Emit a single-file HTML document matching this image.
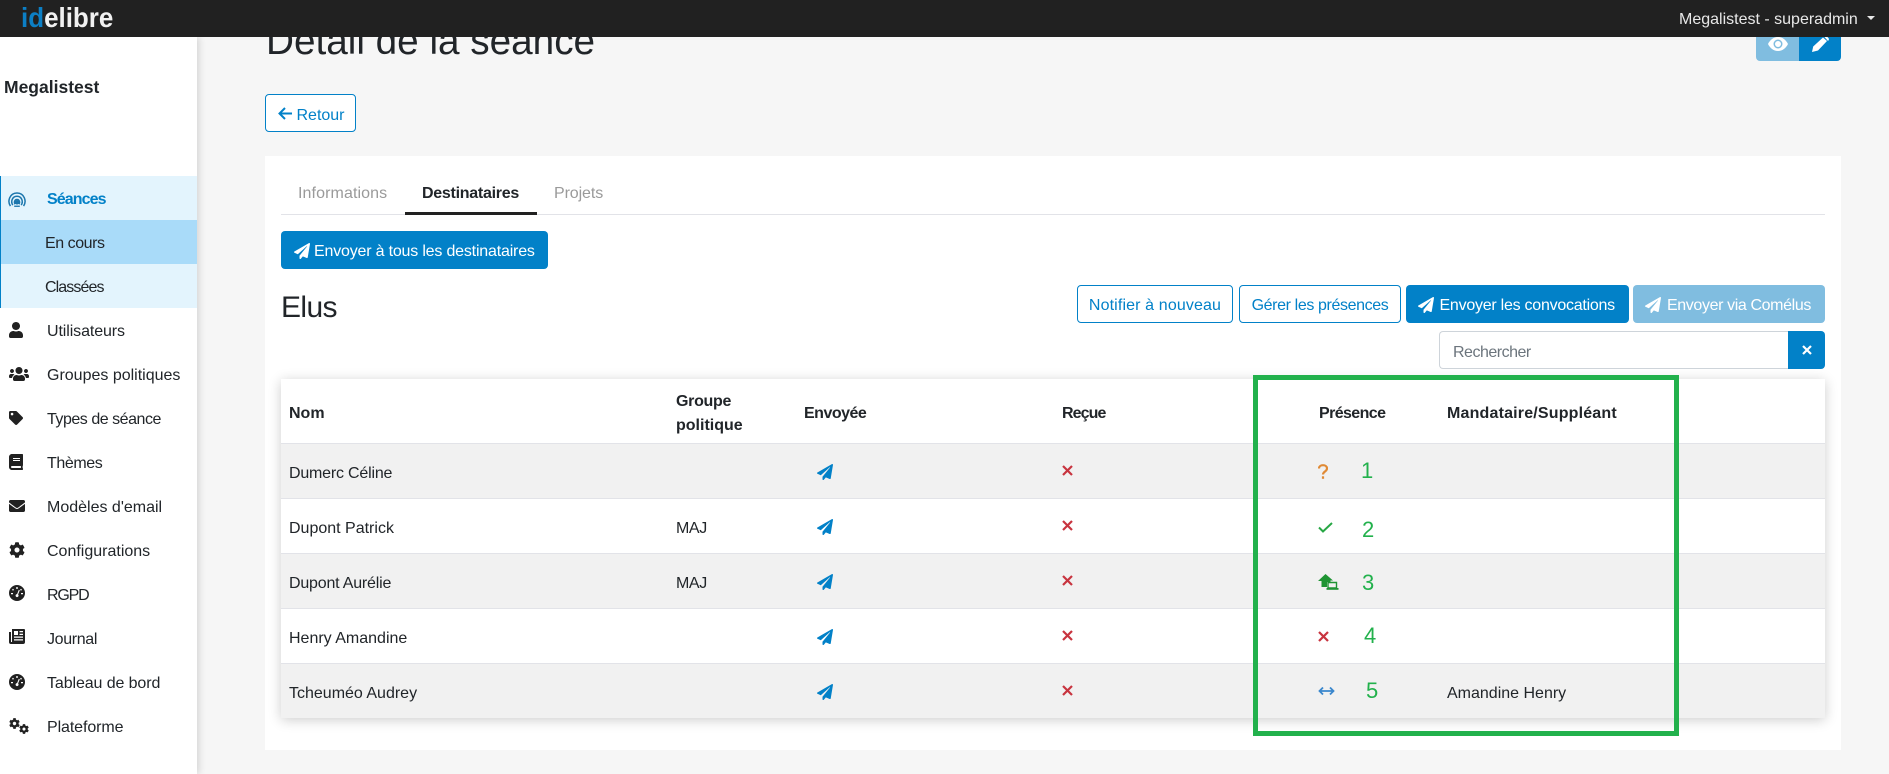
<!DOCTYPE html>
<html lang="fr"><head><meta charset="utf-8"><title>idelibre</title>
<style>
html,body{margin:0;padding:0}
body{width:1889px;height:774px;overflow:hidden;position:relative;background:#f6f6f6;font-family:"Liberation Sans",sans-serif;font-size:16px;color:#212529}
.a,.t,svg,.b{position:absolute}
.t{line-height:20px;white-space:nowrap;margin-top:4px}
.b{box-sizing:border-box;border-radius:4px;text-align:center;white-space:nowrap;line-height:40px;font-size:16px}
.o{border:1px solid #0281c8;color:#0281c8;background:#fff}
.f{background:#0281c8;color:#fff;line-height:42px;text-align:left}
.h{font-weight:bold}
.line{position:absolute;left:281px;width:1544px;height:2px;background:#e2e3e8}
.m{fill:#212121}
.g{font-size:22px;color:#22b14c;margin-top:0}
</style></head><body>
<div class="t" style="left:266px;top:14px;font-size:38.700px;line-height:48px;color:#212529">Détail de la séance</div>
<div class="a" style="left:1756px;top:20px;width:43px;height:41px;background:#80bde0;border-radius:0 0 0 4px"></div>
<div class="a" style="left:1799px;top:20px;width:42px;height:41px;background:#0281c8;border-radius:0 0 4px 0"></div>
<svg style="left:1768px;top:37px" width="20" height="14" viewBox="0 0 20 14"><path fill="#fff" d="M10 0C5.500 0 2 3 0 7c2 4 5.500 7 10 7s8-3 10-7c-2-4-5.500-7-10-7zm0 11.500a4.500 4.500 0 1 1 0-9 4.500 4.500 0 0 1 0 9z"/><circle cx="10" cy="7" r="3" fill="#fff"/></svg>
<svg style="left:1812px;top:36px" width="17" height="16" viewBox="0 0 17 16"><path fill="#fff" d="M11 1.500l4 3.500L6 14.500 0 16l1.200-5.500zM12 .5c1-.8 2-.7 2.800 0l1.500 1.400c.8.800.8 1.900 0 2.700L16 5z"/></svg>

<div class="a" style="left:0;top:37px;width:197px;height:737px;background:#fff;box-shadow:2px 0 7px rgba(0,0,0,.14)"></div>
<div class="a" style="left:0;top:0;width:1889px;height:37px;background:#212121"></div>
<div class="t" style="left:21px;top:3px;margin:0;line-height:30px;font-size:28px;font-weight:bold;color:#f1f1f1;transform:scaleX(.927);transform-origin:left center"><span style="color:#0c7fc5">id</span>elibre</div>
<div class="t" style="left:1679px;top:6px;color:#e8e8e8">Megalistest - superadmin</div>
<div class="a" style="left:1867px;top:16px;width:0;height:0;border:4.500px solid transparent;border-top-color:#e8e8e8;border-bottom:0"></div>

<div class="t h" style="left:4px;top:77px;margin:0;font-size:17.500px">Megalistest</div>
<div class="a" style="left:0;top:176px;width:197px;height:132px;background:#e3f4fd;border-left:1px solid #0281c8;box-sizing:border-box"></div>
<div class="a" style="left:1px;top:220px;width:196px;height:44px;background:#a9dbf9"></div>
<div class="t h" style="left:47px;top:186px;color:#0281c8;letter-spacing:-.9px">Séances</div>
<div class="t" style="left:45px;top:230px;letter-spacing:-.45px">En cours</div>
<div class="t" style="left:45px;top:274px;letter-spacing:-.9px">Classées</div>
<div class="t" style="left:47px;top:318px;letter-spacing:-.1px">Utilisateurs</div>
<div class="t" style="left:47px;top:362px">Groupes politiques</div>
<div class="t" style="left:47px;top:406px;letter-spacing:-.47px">Types de séance</div>
<div class="t" style="left:47px;top:450px;letter-spacing:-.4px">Thèmes</div>
<div class="t" style="left:47px;top:494px">Modèles d'email</div>
<div class="t" style="left:47px;top:538px">Configurations</div>
<div class="t" style="left:47px;top:582px;letter-spacing:-1.2px">RGPD</div>
<div class="t" style="left:47px;top:626px;letter-spacing:-.35px">Journal</div>
<div class="t" style="left:47px;top:670px;letter-spacing:-.1px">Tableau de bord</div>
<div class="t" style="left:47px;top:714px;letter-spacing:-.1px">Plateforme</div>

<svg style="left:7px;top:192px" width="20" height="15" viewBox="0 0 20 16" fill="none" stroke="#1c76ad" stroke-width="1.600"><path d="M3 15C-.5 10 2 1 10 1s10.500 9 7 14"/><path d="M5.500 14C3 10 5 4.500 10 4.500S17 10 14.500 14"/><path d="M8 13c-1.500-2-.5-5 2-5s3.500 3 2 5"/><circle cx="10" cy="11" r="1.500" fill="#1c76ad"/><path d="M7 15.200h6" stroke-width="1.400"/></svg>
<svg class="m" style="left:9px;top:322px" width="14" height="16" viewBox="0 0 448 512"><path d="M224 256c70.700 0 128-57.300 128-128S294.700 0 224 0 96 57.300 96 128s57.300 128 128 128zm89.600 32h-16.700c-22.200 10.200-46.900 16-72.900 16s-50.600-5.800-72.900-16h-16.700C60.200 288 0 348.200 0 422.400V464c0 26.500 21.500 48 48 48h352c26.500 0 48-21.500 48-48v-41.600c0-74.200-60.200-134.400-134.400-134.400z"/></svg>
<svg class="m" style="left:9px;top:366px" width="20" height="16" viewBox="0 0 640 512"><path d="M96 224c35.300 0 64-28.700 64-64s-28.700-64-64-64-64 28.700-64 64 28.700 64 64 64zm448 0c35.300 0 64-28.700 64-64s-28.700-64-64-64-64 28.700-64 64 28.700 64 64 64zm32 32h-64c-17.600 0-33.500 7.100-45.100 18.600 40.300 22.100 68.900 62 75.100 109.400h66c17.700 0 32-14.300 32-32v-32c0-35.300-28.700-64-64-64zm-256 0c61.900 0 112-50.100 112-112S381.900 32 320 32 208 82.100 208 144s50.100 112 112 112zm76.800 32h-8.300c-20.800 10-43.900 16-68.500 16s-47.600-6-68.500-16h-8.300C179.600 288 128 339.600 128 403.200V432c0 26.500 21.500 48 48 48h288c26.500 0 48-21.500 48-48v-28.800c0-63.600-51.600-115.200-115.200-115.200zm-223.700-13.400C161.500 263.100 145.600 256 128 256H64c-35.300 0-64 28.700-64 64v32c0 17.700 14.300 32 32 32h65.900c6.300-47.400 34.900-87.300 75.200-109.400z"/></svg>
<svg class="m" style="left:9px;top:411px" width="14" height="14" viewBox="0 0 512 512"><path d="M0 252.118V48C0 21.490 21.490 0 48 0h204.118a48 48 0 0 1 33.941 14.059l211.882 211.882c18.745 18.745 18.745 49.137 0 67.882L293.823 497.941c-18.745 18.745-49.137 18.745-67.882 0L14.059 286.059A48 48 0 0 1 0 252.118zM112 64c-26.510 0-48 21.490-48 48s21.490 48 48 48 48-21.490 48-48-21.490-48-48-48z"/></svg>
<svg class="m" style="left:9px;top:454px" width="14" height="16" viewBox="0 0 448 512"><path d="M448 360V24c0-13.300-10.700-24-24-24H96C43 0 0 43 0 96v320c0 53 43 96 96 96h328c13.300 0 24-10.700 24-24v-16c0-7.500-3.500-14.300-8.900-18.700-4.200-15.400-4.200-59.300 0-74.700 5.400-4.300 8.900-11.100 8.900-18.600zM128 134c0-3.300 2.700-6 6-6h212c3.300 0 6 2.700 6 6v20c0 3.300-2.700 6-6 6H134c-3.300 0-6-2.700-6-6v-20zm0 64c0-3.300 2.700-6 6-6h212c3.300 0 6 2.700 6 6v20c0 3.300-2.700 6-6 6H134c-3.300 0-6-2.700-6-6v-20zm253.400 250H96c-17.700 0-32-14.300-32-32 0-17.600 14.400-32 32-32h285.400c-1.900 17.100-1.900 46.900 0 64z"/></svg>
<svg class="m" style="left:9px;top:498px" width="16" height="16" viewBox="0 0 512 512"><path d="M502.300 190.800c3.900-3.100 9.700-.2 9.700 4.700V400c0 26.500-21.500 48-48 48H48c-26.500 0-48-21.500-48-48V195.600c0-5 5.700-7.800 9.700-4.700 22.400 17.400 52.100 39.500 154.100 113.600 21.100 15.400 56.700 47.800 92.200 47.600 35.700.3 72-32.800 92.300-47.600 102-74.100 131.600-96.300 154-113.700zM256 320c23.200.4 56.600-29.200 73.400-41.400 132.700-96.300 142.800-104.700 173.400-128.700 5.800-4.500 9.200-11.500 9.200-18.900v-19c0-26.500-21.500-48-48-48H48C21.500 64 0 85.500 0 112v19c0 7.400 3.400 14.300 9.200 18.900 30.600 23.900 40.700 32.400 173.400 128.700 16.800 12.200 50.200 41.800 73.400 41.400z"/></svg>
<svg class="m" style="left:9px;top:542px" width="16" height="16" viewBox="0 0 512 512"><path id="cg" d="M487.400 315.700l-42.600-24.600c4.300-23.200 4.300-47 0-70.200l42.600-24.600c4.900-2.800 7.100-8.600 5.500-14-11.100-35.600-30-67.800-54.700-94.600-3.800-4.100-10-5.100-14.800-2.300L380.800 110c-17.900-15.400-38.500-27.300-60.800-35.100V25.800c0-5.600-3.900-10.500-9.400-11.700-36.700-8.200-74.300-7.800-109.200 0-5.500 1.200-9.400 6.100-9.400 11.700V75c-22.200 7.900-42.800 19.800-60.800 35.100L88.700 85.500c-4.900-2.800-11-1.900-14.800 2.300-24.700 26.700-43.600 58.900-54.700 94.600-1.700 5.400.6 11.200 5.500 14L67.300 221c-4.300 23.200-4.300 47 0 70.200l-42.600 24.600c-4.900 2.800-7.100 8.600-5.500 14 11.100 35.600 30 67.800 54.700 94.600 3.800 4.100 10 5.100 14.800 2.300l42.600-24.600c17.900 15.400 38.500 27.300 60.800 35.100v49.200c0 5.600 3.900 10.500 9.400 11.700 36.700 8.200 74.300 7.800 109.200 0 5.500-1.200 9.400-6.100 9.400-11.700v-49.200c22.200-7.900 42.800-19.800 60.800-35.100l42.600 24.600c4.900 2.800 11 1.900 14.800-2.300 24.700-26.700 43.600-58.900 54.700-94.600 1.500-5.500-.7-11.300-5.600-14.100zM256 336c-44.100 0-80-35.900-80-80s35.900-80 80-80 80 35.900 80 80-35.900 80-80 80z"/></svg>
<svg style="left:9px;top:585px" width="16" height="16" viewBox="0 0 16 16"><circle cx="8" cy="8" r="8" fill="#212121"/><path fill="#fff" d="M7.300 2h1.400v2H7.300zM3 4.700l1-1 1 1-1 1zM2 8h2v1.300H2zM12 3.700l1 1-1 1-1-1zM12 8h2v1.300h-2zM9.800 4.800l1 .5-1.700 4.200a1.500 1.500 0 1 1-1-.4z"/></svg>
<svg class="m" style="left:9px;top:629px" width="16" height="15" viewBox="0 0 16 15"><path fill-rule="evenodd" d="M3 0h12a1 1 0 0 1 1 1v12a2 2 0 0 1-2 2H2a2 2 0 0 1-2-2V3h2v10h1zM5 2v4h4V2zm5.500 0v1.300H14V2zm0 2.700V6H14V4.700zM5 7.500v1.300h9V7.500zm0 2.700v1.300h9v-1.300z"/></svg>
<svg style="left:9px;top:674px" width="16" height="16" viewBox="0 0 16 16"><circle cx="8" cy="8" r="8" fill="#212121"/><path fill="#fff" d="M7.300 2h1.400v2H7.300zM3 4.700l1-1 1 1-1 1zM2 8h2v1.300H2zM12 3.700l1 1-1 1-1-1zM12 8h2v1.300h-2zM9.800 4.800l1 .5-1.700 4.200a1.500 1.500 0 1 1-1-.4z"/></svg>
<svg class="m" style="left:9px;top:718px" width="20" height="16" viewBox="0 0 20 16"><svg x="0" y="0" width="11" height="11" viewBox="0 0 512 512"><use href="#cg"/></svg><svg x="10" y="6" width="10" height="10" viewBox="0 0 512 512"><use href="#cg"/></svg></svg>

<div class="b o" style="left:265px;top:94px;width:91px;height:38px;padding-left:20px;line-height:42px">Retour</div>
<svg style="left:278px;top:107px" width="14" height="13" viewBox="0 0 14 13" fill="none" stroke="#0281c8" stroke-width="2"><path d="M14 6.500H2M7 1L1.500 6.500 7 12"/></svg>

<div class="a" style="left:265px;top:156px;width:1576px;height:594px;background:#fff"></div>
<div class="t" style="left:298px;top:180px;color:#9a9a9a;letter-spacing:.1px">Informations</div>
<div class="t h" style="left:422px;top:180px;letter-spacing:-.27px">Destinataires</div>
<div class="t" style="left:554px;top:180px;color:#9a9a9a;letter-spacing:-.1px">Projets</div>
<div class="line" style="top:214px;height:1px"></div>
<div class="a" style="left:405px;top:212px;width:132px;height:3px;background:#212121"></div>

<div class="b f" style="left:281px;top:231px;width:267px;height:38px;padding-left:33px;letter-spacing:-.19px">Envoyer à tous les destinataires</div>
<svg style="left:294px;top:243px" width="16" height="16" viewBox="0 0 512 512"><path id="pl" fill="#fff" d="M476 3.200L12.500 270.600c-18.100 10.400-15.800 35.600 2.200 43.200L121 358.400l287.300-253.200c5.500-4.900 13.300 2.600 8.600 8.300L176 407v80.500c0 23.600 28.500 32.900 42.500 15.800L282 426l124.600 52.200c14.200 6 30.400-2.900 33-18.200l72-432C515 7.800 493.300-6.800 476 3.200z"/></svg>
<div class="t" style="left:281px;top:288px;margin:0;font-size:30px;line-height:40px;letter-spacing:-.6px">Elus</div>

<div class="b o" style="left:1077px;top:285px;width:156px;height:38px;letter-spacing:.13px">Notifier à nouveau</div>
<div class="b o" style="left:1239px;top:285px;width:162px;height:38px;letter-spacing:-.38px">Gérer les présences</div>
<div class="b f" style="left:1406px;top:285px;width:223px;height:38px;padding-left:33.500px;letter-spacing:-.25px">Envoyer les convocations</div>
<svg style="left:1418px;top:297px" width="16" height="16" viewBox="0 0 512 512"><path fill="#fff" d="M476 3.200L12.500 270.600c-18.100 10.400-15.800 35.600 2.200 43.200L121 358.400l287.300-253.200c5.500-4.900 13.300 2.600 8.600 8.300L176 407v80.500c0 23.600 28.500 32.900 42.500 15.800L282 426l124.600 52.200c14.200 6 30.400-2.900 33-18.200l72-432C515 7.800 493.300-6.800 476 3.200z"/></svg>
<div class="b f" style="left:1633px;top:285px;width:192px;height:38px;padding-left:34px;background:#80bde0;letter-spacing:-.38px">Envoyer via Comélus</div>
<svg style="left:1645px;top:297px" width="16" height="16" viewBox="0 0 512 512"><path fill="#fff" d="M476 3.200L12.500 270.600c-18.100 10.400-15.800 35.600 2.200 43.200L121 358.400l287.300-253.200c5.500-4.900 13.300 2.600 8.600 8.300L176 407v80.500c0 23.600 28.500 32.900 42.500 15.800L282 426l124.600 52.200c14.200 6 30.400-2.900 33-18.200l72-432C515 7.800 493.300-6.800 476 3.200z"/></svg>

<div class="a" style="left:1439px;top:331px;width:350px;height:38px;box-sizing:border-box;border:1px solid #ced4da;border-right:0;border-radius:4px 0 0 4px;background:#fff"></div>
<div class="t" style="left:1453px;top:339px;color:#6c757d;letter-spacing:-.5px">Rechercher</div>
<div class="a" style="left:1788px;top:331px;width:37px;height:38px;background:#0281c8;border-radius:0 4px 4px 0"></div>
<svg style="left:1802px;top:345px" width="10" height="10" viewBox="0 0 10 10" stroke="#fff" stroke-width="2.200"><path d="M1 1l8 8M9 1l-8 8"/></svg>

<div class="a" style="left:281px;top:379px;width:1544px;height:339px;background:#fff;box-shadow:0 2px 12px rgba(0,0,0,.2)"></div>
<div class="a" style="left:281px;top:443px;width:1544px;height:55px;background:#f1f1f1"></div>
<div class="a" style="left:281px;top:553px;width:1544px;height:55px;background:#f1f1f1"></div>
<div class="a" style="left:281px;top:663px;width:1544px;height:55px;background:#f1f1f1"></div>
<div class="line" style="top:443px;height:1px"></div>
<div class="line" style="top:498px;height:1px"></div>
<div class="line" style="top:553px;height:1px"></div>
<div class="line" style="top:608px;height:1px"></div>
<div class="line" style="top:663px;height:1px"></div>

<div class="t h" style="left:289px;top:400px">Nom</div>
<div class="t h" style="left:676px;top:388px;letter-spacing:-.3px">Groupe</div>
<div class="t h" style="left:676px;top:412px">politique</div>
<div class="t h" style="left:804px;top:400px;letter-spacing:-.5px">Envoyée</div>
<div class="t h" style="left:1062px;top:400px;letter-spacing:-.9px">Reçue</div>
<div class="t h" style="left:1319px;top:400px;letter-spacing:-.6px">Présence</div>
<div class="t h" style="left:1447px;top:400px;letter-spacing:.18px">Mandataire/Suppléant</div>

<div class="t" style="left:289px;top:460px;letter-spacing:-.2px">Dumerc Céline</div>
<div class="t" style="left:289px;top:515px">Dupont Patrick</div>
<div class="t" style="left:676px;top:515px;letter-spacing:-.4px">MAJ</div>
<div class="t" style="left:289px;top:570px;letter-spacing:-.2px">Dupont Aurélie</div>
<div class="t" style="left:676px;top:570px;letter-spacing:-.4px">MAJ</div>
<div class="t" style="left:289px;top:625px">Henry Amandine</div>
<div class="t" style="left:289px;top:680px">Tcheuméo Audrey</div>
<div class="t" style="left:1447px;top:680px">Amandine Henry</div>

<svg style="left:817px;top:464px" width="16" height="16" viewBox="0 0 512 512"><path fill="#0281c8" d="M476 3.200L12.500 270.600c-18.100 10.400-15.800 35.600 2.200 43.200L121 358.400l287.300-253.200c5.500-4.900 13.300 2.600 8.600 8.300L176 407v80.500c0 23.600 28.500 32.900 42.500 15.800L282 426l124.600 52.200c14.200 6 30.400-2.900 33-18.200l72-432C515 7.800 493.300-6.800 476 3.200z"/></svg>
<svg style="left:817px;top:519px" width="16" height="16" viewBox="0 0 512 512"><path fill="#0281c8" d="M476 3.200L12.500 270.600c-18.100 10.400-15.800 35.600 2.200 43.200L121 358.400l287.300-253.200c5.500-4.900 13.300 2.600 8.600 8.300L176 407v80.500c0 23.600 28.500 32.900 42.500 15.800L282 426l124.600 52.200c14.200 6 30.400-2.900 33-18.200l72-432C515 7.800 493.300-6.800 476 3.200z"/></svg>
<svg style="left:817px;top:574px" width="16" height="16" viewBox="0 0 512 512"><path fill="#0281c8" d="M476 3.200L12.500 270.600c-18.100 10.400-15.800 35.600 2.200 43.200L121 358.400l287.300-253.200c5.500-4.900 13.300 2.600 8.600 8.300L176 407v80.500c0 23.600 28.500 32.900 42.500 15.800L282 426l124.600 52.200c14.200 6 30.400-2.900 33-18.200l72-432C515 7.800 493.300-6.800 476 3.200z"/></svg>
<svg style="left:817px;top:629px" width="16" height="16" viewBox="0 0 512 512"><path fill="#0281c8" d="M476 3.200L12.500 270.600c-18.100 10.400-15.800 35.600 2.200 43.200L121 358.400l287.300-253.200c5.500-4.900 13.300 2.600 8.600 8.300L176 407v80.500c0 23.600 28.500 32.900 42.500 15.800L282 426l124.600 52.200c14.200 6 30.400-2.900 33-18.200l72-432C515 7.800 493.300-6.800 476 3.200z"/></svg>
<svg style="left:817px;top:684px" width="16" height="16" viewBox="0 0 512 512"><path fill="#0281c8" d="M476 3.200L12.500 270.600c-18.100 10.400-15.800 35.600 2.200 43.200L121 358.400l287.300-253.200c5.500-4.900 13.300 2.600 8.600 8.300L176 407v80.500c0 23.600 28.500 32.900 42.500 15.800L282 426l124.600 52.200c14.200 6 30.400-2.900 33-18.200l72-432C515 7.800 493.300-6.800 476 3.200z"/></svg>

<svg style="left:1062px;top:465px" width="11" height="11" viewBox="0 0 11 11" stroke="#c8343f" stroke-width="2.200"><path d="M1 1l9 9M10 1l-9 9"/></svg>
<svg style="left:1062px;top:520px" width="11" height="11" viewBox="0 0 11 11" stroke="#c8343f" stroke-width="2.200"><path d="M1 1l9 9M10 1l-9 9"/></svg>
<svg style="left:1062px;top:575px" width="11" height="11" viewBox="0 0 11 11" stroke="#c8343f" stroke-width="2.200"><path d="M1 1l9 9M10 1l-9 9"/></svg>
<svg style="left:1062px;top:630px" width="11" height="11" viewBox="0 0 11 11" stroke="#c8343f" stroke-width="2.200"><path d="M1 1l9 9M10 1l-9 9"/></svg>
<svg style="left:1062px;top:685px" width="11" height="11" viewBox="0 0 11 11" stroke="#c8343f" stroke-width="2.200"><path d="M1 1l9 9M10 1l-9 9"/></svg>

<svg style="left:1318px;top:464px" width="10" height="15" viewBox="0 0 10 15" fill="none" stroke="#e08a35" stroke-width="2.200"><path d="M1 4.500C1 2.500 2.800 1.200 5 1.200s4 1.300 4 3.300C9 7.500 5 7.500 5 10.500"/><path d="M5 12.300v2.500"/></svg>
<svg style="left:1318px;top:522px" width="15" height="11" viewBox="0 0 15 11" fill="none" stroke="#28a745" stroke-width="2"><path d="M1 5.500l4 4L14 1"/></svg>
<svg style="left:1318px;top:574px" width="21" height="16" viewBox="0 0 21 16"><path fill="#1f9433" d="M7.500 0L15 6.500h-2.500V8H9v5H3.500V7H0z"/><path fill="none" stroke="#1f9433" stroke-width="1.400" d="M10 8.500h8.500v5.500H10z"/><path fill="#1f9433" d="M8.500 14h12v1.800h-12z"/></svg>
<svg style="left:1318px;top:631px" width="11" height="11" viewBox="0 0 11 11" stroke="#c8343f" stroke-width="2.200"><path d="M1 1l9 9M10 1l-9 9"/></svg>
<svg style="left:1318px;top:686px" width="17" height="10" viewBox="0 0 17 10" fill="none" stroke="#3a87cd" stroke-width="1.800"><path d="M2 5h13M5 1.500L1.500 5 5 8.500M12 1.500L15.500 5 12 8.500"/></svg>

<div class="t g" style="left:1361px;top:461px">1</div>
<div class="t g" style="left:1362px;top:520px">2</div>
<div class="t g" style="left:1362px;top:573px">3</div>
<div class="t g" style="left:1364px;top:626px">4</div>
<div class="t g" style="left:1366px;top:681px">5</div>
<div class="a" style="left:1253px;top:375px;width:426px;height:361px;box-sizing:border-box;border:5px solid #22b14c"></div>
</body></html>
